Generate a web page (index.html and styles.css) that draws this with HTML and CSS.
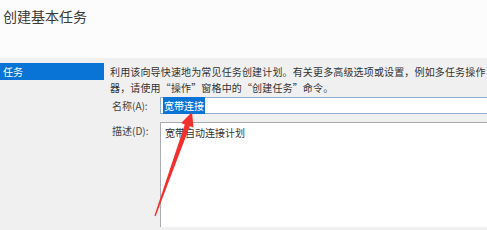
FILE: index.html
```html
<!DOCTYPE html>
<html lang="zh-CN">
<head>
    <meta charset="UTF-8">
    <title>创建基本任务</title>
    <link rel="stylesheet" href="styles.css">
</head>
<body>

    <div class="header">
        <h2>创建基本任务</h2>
    </div>

    <div class="main">
        <div class="sidebar">
            <div class="step active">任务</div>
        </div>

        <div class="content">
            <p class="intro">利用该向导快速地为常见任务创建计划。有关更多高级选项或设置，例如多任务操作<br>器，请使用“操作”窗格中的“创建任务”命令。</p>

            <div class="row">
                <label>名称(A):</label>
                <div class="field name"><span class="selected">宽带连接</span></div>
            </div>

            <div class="row">
                <label>描述(D):</label>
                <div class="field desc">宽带自动连接计划</div>
            </div>
        </div>
    </div>

    <svg class="arrow" width="487" height="230" viewBox="0 0 487 230">
        <polygon points="192,112 193.5,127.5 189.8,126.2 155.6,216.3 154.4,215.8 184.8,124.6 181.2,123" fill="#f2302e"/>
    </svg>

</body>
</html>
```

FILE: styles.css
```css
body {
    margin: 0;
    width: 487px;
    height: 230px;
    overflow: hidden;
    background-color: #f0f0f0;
    font-family: "Noto Sans CJK SC", "Noto Sans", sans-serif;
    color: #333;
    position: relative;
}
.header {
    background-color: #fcfcfc;
    height: 58px;
    padding: 7px 0 0 3px;
    box-sizing: border-box;
}
.header h2 {
    margin: 0;
    font-size: 14px;
    font-weight: normal;
    color: #3a3a3a;
    line-height: 18px;
}
.main {
    display: flex;
    height: 172px;
}
.sidebar {
    width: 104px;
    padding-top: 5px;
}
.step {
    height: 17px;
    line-height: 17px;
    font-size: 10px;
    padding-left: 3px;
}
.step.active {
    background-color: #0a74d6;
    color: white;
}
.content {
    flex: 1;
    padding: 6px 0 0 6px;
    min-width: 0;
}
.intro {
    margin: 0;
    font-size: 10px;
    letter-spacing: 0.15px;
    line-height: 16px;
    white-space: nowrap;
}
.row {
    display: flex;
    align-items: flex-start;
    margin-top: 1px;
}
.row + .row {
    margin-top: 8px;
}
.row label {
    width: 48px;
    padding-left: 2px;
    font-size: 10px;
    line-height: 17px;
    color: #444;
}
.field {
    flex: 1;
    background-color: white;
    font-size: 10px;
    line-height: 15px;
    border-right: none;
}
.name {
    height: 15px;
    border: 1px solid #8fb0d3;
    border-right: none;
    padding-left: 2px;
}
.selected {
    background-color: #0a74d6;
    color: white;
    padding: 1px 1px;
}
.desc {
    height: 100px;
    border: 1px solid #a9abb0;
    border-right: none;
    border-bottom: none;
    padding: 2px 4px;
}
.arrow {
    position: absolute;
    left: 0;
    top: 0;
}
```
